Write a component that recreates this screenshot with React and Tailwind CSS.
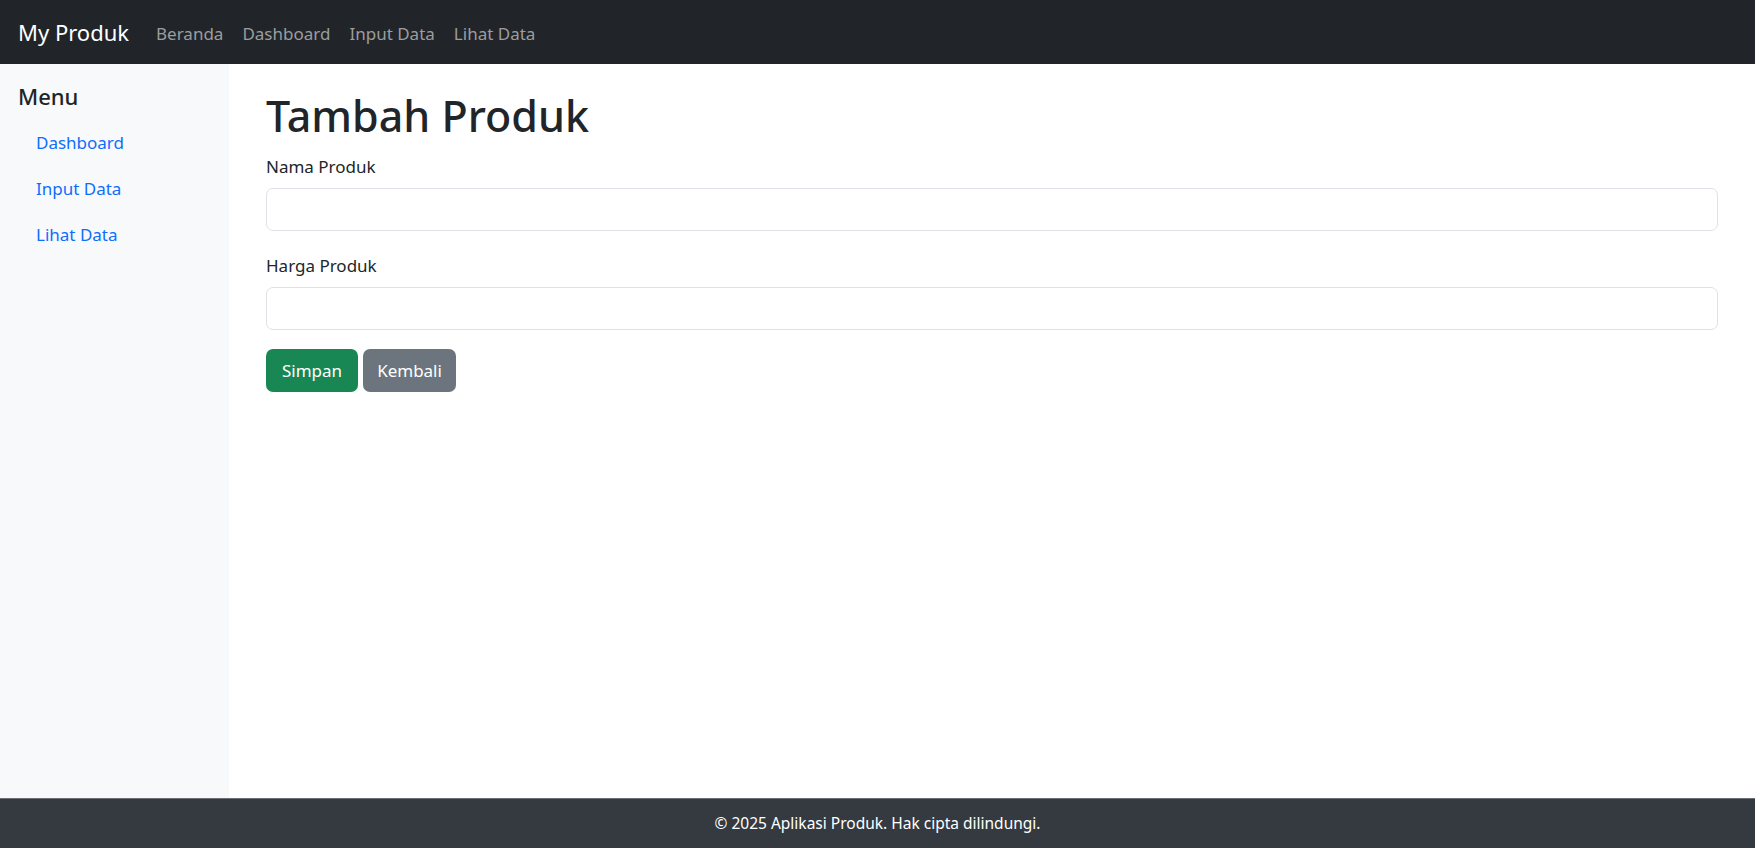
export default function App() {
  const navLinks = ["Beranda", "Dashboard", "Input Data", "Lihat Data"];
  const sideLinks = ["Dashboard", "Input Data", "Lihat Data"];

  return (
    <div className="min-h-screen flex flex-col bg-white text-[#212529] font-['Noto_Sans',sans-serif]">
      <nav className="h-16 shrink-0 bg-[#212529] flex items-center px-[18px]">
        <span className="text-[22px] text-white mr-[27px]">My Produk</span>
        <ul className="flex gap-[19px] pt-[3px]">
          {navLinks.map((l) => (
            <li key={l} className="text-[17px] text-[#9c9d9f]">{l}</li>
          ))}
        </ul>
      </nav>

      <div className="flex flex-1">
        <aside className="w-[229px] shrink-0 bg-[#f8f9fa] px-[18px] pt-[17px]">
          <h5 className="text-[22px] font-medium leading-[30px] mb-[9px]">Menu</h5>
          <ul className="flex flex-col">
            {sideLinks.map((l) => (
              <li key={l} className="h-[46px] flex items-center pl-[18px] text-[17px] text-[#0d6efd]">
                {l}
              </li>
            ))}
          </ul>
        </aside>

        <main className="flex-1 px-[37px] pt-[24px]">
          <h1 className="text-[43px] font-medium leading-[56px] mb-[10px]">Tambah Produk</h1>
          <form>
            <div className="mb-[22px]">
              <label className="block text-[17px] leading-[26px] mb-[8px]">Nama Produk</label>
              <input type="text" className="w-full h-[43px] rounded-[7px] border border-[#dee2e6] px-3 outline-none" />
            </div>
            <div className="mb-[19px]">
              <label className="block text-[17px] leading-[26px] mb-[8px]">Harga Produk</label>
              <input type="text" className="w-full h-[43px] rounded-[7px] border border-[#dee2e6] px-3 outline-none" />
            </div>
            <div className="flex gap-[5px]">
              <button type="button" className="h-[43px] px-[16px] rounded-[7px] bg-[#198754] text-white text-[17px]">
                Simpan
              </button>
              <button type="button" className="h-[43px] px-[14px] rounded-[7px] bg-[#6c757d] text-white text-[17px]">
                Kembali
              </button>
            </div>
          </form>
        </main>
      </div>

      <footer className="h-[50px] shrink-0 bg-[#343a40] border-t border-[#6a6f75] flex items-center justify-center">
        <p className="text-[15.5px] text-white">© 2025 Aplikasi Produk. Hak cipta dilindungi.</p>
      </footer>
    </div>
  );
}
